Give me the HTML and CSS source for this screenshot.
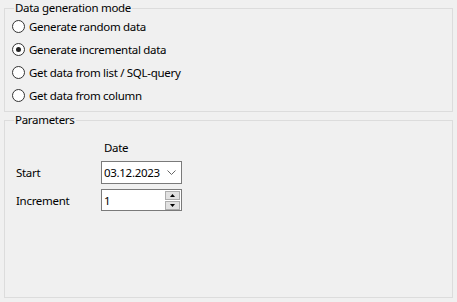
FILE: index.html
```html
<!DOCTYPE html>
<html lang="en">
<head>
  <meta charset="UTF-8">
  <title>Data generation</title>
  <link rel="stylesheet" href="styles.css">
</head>
<body>

  <fieldset class="group mode">
    <legend>Data generation mode</legend>
    <label class="radio"><span class="dot"></span>Generate random data</label>
    <label class="radio checked"><span class="dot"></span>Generate incremental data</label>
    <label class="radio"><span class="dot"></span>Get data from list / SQL-query</label>
    <label class="radio"><span class="dot"></span>Get data from column</label>
  </fieldset>

  <fieldset class="group params">
    <legend>Parameters</legend>
    <div class="grid">
      <span></span>
      <span class="head">Date</span>

      <span class="label">Start</span>
      <div class="field combo">
        <span>03.12.2023</span>
        <svg width="9" height="6" viewBox="0 0 9 6"><path d="M0.5 0.5 L4.5 4.5 L8.5 0.5" fill="none" stroke="#666" stroke-width="1"/></svg>
      </div>

      <span class="label">Increment</span>
      <div class="field spin">
        <span>1</span>
        <div class="spin-btns">
          <div class="btn"><svg width="5" height="3" viewBox="0 0 5 3"><path d="M2.5 0 L5 3 L0 3 Z" fill="#000"/></svg></div>
          <div class="btn"><svg width="5" height="3" viewBox="0 0 5 3"><path d="M0 0 L5 0 L2.5 3 Z" fill="#000"/></svg></div>
        </div>
      </div>
    </div>
  </fieldset>

</body>
</html>
```

FILE: styles.css
```css
body {
  margin: 0;
  padding: 0 4px;
  background-color: #f0f0f0;
  font-family: "Noto Sans", Arial, sans-serif;
  font-size: 11.5px;
  letter-spacing: -0.3px;
  color: #000;
}

.group {
  margin: 0;
  padding: 0 0 0 7px;
  border: 1px solid #dcdcdc;
  width: 449px;
  box-sizing: border-box;
}

.group legend {
  margin-left: 2px;
  padding: 0 1px;
  line-height: 16px;
}

.mode {
  height: 112px;
}

.radio {
  display: flex;
  align-items: center;
  gap: 4px;
  height: 23px;
}

.mode .radio:first-of-type {
  margin-top: -1px;
}

.dot {
  width: 11px;
  height: 11px;
  border: 1px solid #333;
  border-radius: 50%;
  background-color: #fff;
  display: flex;
  align-items: center;
  justify-content: center;
}

.checked .dot::after {
  content: "";
  width: 5px;
  height: 5px;
  border-radius: 50%;
  background-color: #222;
}

.params {
  height: 186px;
}

.grid {
  display: grid;
  grid-template-columns: 85px 81px;
  row-gap: 5px;
  padding-left: 4px;
  margin-top: 12px;
  align-items: center;
}

.head {
  padding-left: 3px;
  line-height: 15px;
  margin-bottom: 1px;
}

.field {
  border: 1px solid #7a7a7a;
  background-color: #fff;
  box-sizing: border-box;
  display: flex;
  align-items: center;
  padding-left: 2px;
}

.combo {
  height: 23px;
  justify-content: space-between;
  padding-right: 5px;
}

.spin {
  height: 22px;
  justify-content: space-between;
  padding-right: 1px;
}

.spin-btns {
  display: flex;
  flex-direction: column;
  gap: 1px;
}

.btn {
  width: 13px;
  height: 7px;
  border: 1px solid #adadad;
  background-color: #e1e1e1;
  display: flex;
  align-items: center;
  justify-content: center;
}

.btn svg {
  display: block;
}
```
